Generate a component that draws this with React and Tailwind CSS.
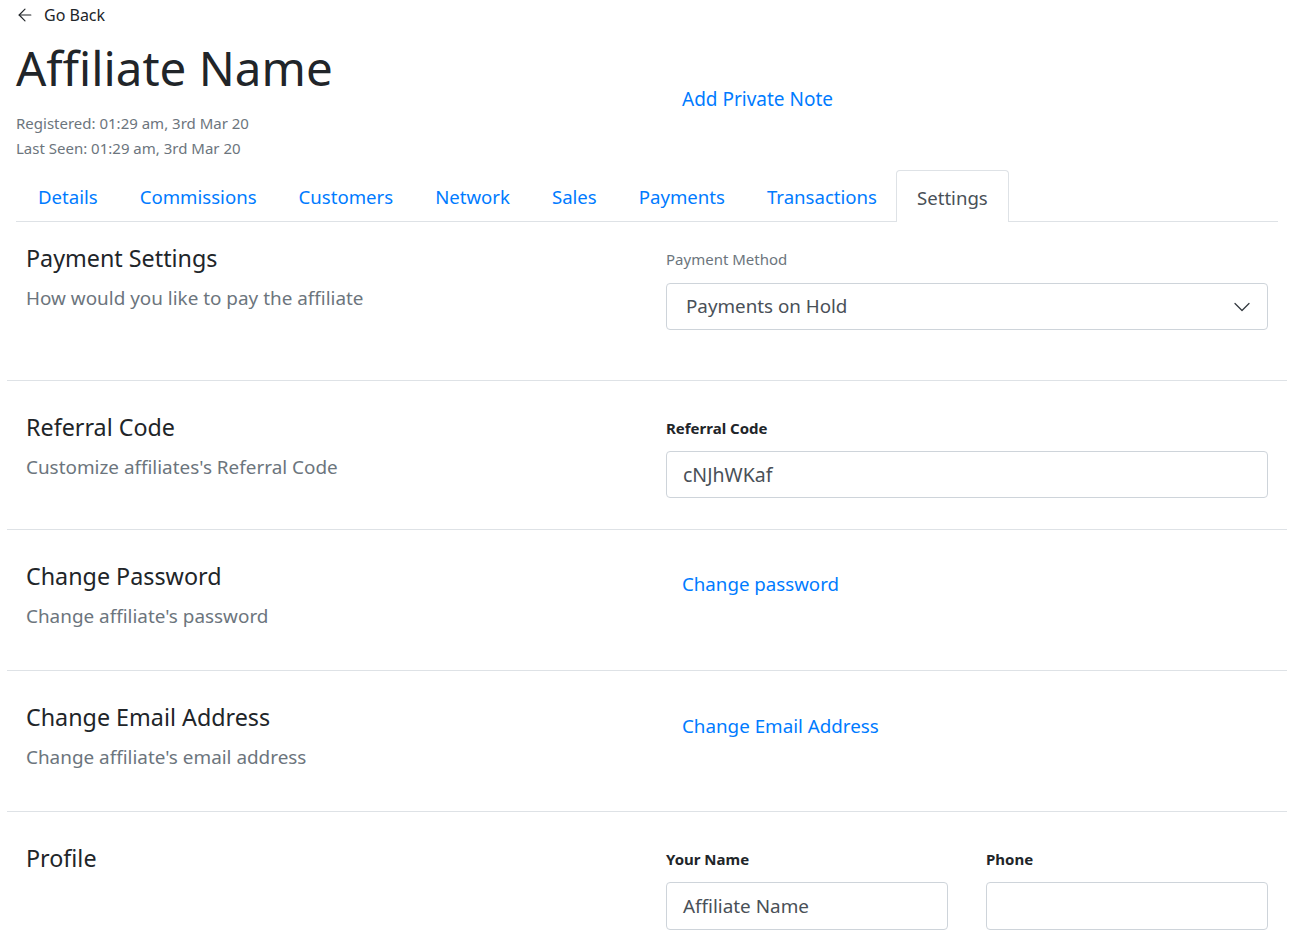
import React from 'react';
import { ArrowLeft, ChevronDown } from 'lucide-react';

const tabs = ['Details', 'Commissions', 'Customers', 'Network', 'Sales', 'Payments', 'Transactions', 'Settings'];

const Section = ({ first, heightClass, title, subtitle, children }) => (
  <div className={`flex border-b border-[#dee2e6] px-[19px] ${first ? 'pt-[22px]' : 'pt-[32px]'} ${heightClass}`}>
    <div className="w-[640px] shrink-0">
      <div className="text-[23.3px] leading-[29px] text-[#212529]">{title}</div>
      {subtitle && (
        <div className="mt-[11px] text-[18.9px] leading-[28px] text-[#6c757d]">{subtitle}</div>
      )}
    </div>
    <div className="flex-1">{children}</div>
  </div>
);

const Label = ({ children, bold }) => (
  <div className={`text-[15px] leading-[22px] mt-[4px] ${bold ? 'font-bold text-[#212529]' : 'text-[#6c757d]'}`}>
    {children}
  </div>
);

export default function App() {
  return (
    <div className="min-h-screen bg-white font-['Noto_Sans',sans-serif] text-[#212529]">
      <div className="px-4">
        {/* Header */}
        <div className="flex h-[30px] items-center gap-[9px] ml-[-1px] text-[16px] text-[#212529]">
          <ArrowLeft size={20} strokeWidth={1.4} />
          <span>Go Back</span>
        </div>
        <div className="flex">
          <div className="w-[650px] shrink-0">
            <h1 className="mt-[4px] text-[47.5px] leading-[67px] text-[#212529]">Affiliate Name</h1>
            <div className="mt-[10px] text-[15px] leading-[25px] text-[#6c757d]">
              <div>Registered: 01:29 am, 3rd Mar 20</div>
              <div>Last Seen: 01:29 am, 3rd Mar 20</div>
            </div>
          </div>
          <div className="pt-[54px] pl-[16px]">
            <a className="text-[19px] leading-[30px] text-[#007bff]">Add Private Note</a>
          </div>
        </div>

        {/* Tabs */}
        <div className="mt-[9px] mr-[-1px] flex h-[52px] border-b border-[#dee2e6]">
          {tabs.map((t, i) => (
            <div
              key={t}
              className={`flex h-[52px] items-center pt-[2px] text-[18.6px] ${
                t === 'Settings'
                  ? 'rounded-t-[4px] border border-b-0 border-[#dee2e6] bg-white px-[20px] text-[#495057] mb-[-1px] ml-[-2px]'
                  : `px-[21px] text-[#007bff] ${i === 0 ? 'pl-[22px]' : ''}`
              }`}
            >
              {t}
            </div>
          ))}
        </div>
      </div>

      {/* Settings */}
      <div className="mx-[7px] w-[1280px]">
        <Section first heightClass="h-[159px]" title="Payment Settings" subtitle="How would you like to pay the affiliate">
          <Label>Payment Method</Label>
          <div className="mt-[13px] flex h-[47px] items-center justify-between rounded-[4px] border border-[#ced4da] pl-[19px] pr-[11px] text-[18.8px] text-[#495057]">
            <span>Payments on Hold</span>
            <ChevronDown size={28} strokeWidth={1.1} className="text-[#343a40]" />
          </div>
        </Section>

        <Section heightClass="h-[149px]" title="Referral Code" subtitle="Customize affiliates's Referral Code">
          <Label bold>Referral Code</Label>
          <div className="mt-[12px] flex h-[47px] items-center rounded-[4px] border border-[#ced4da] px-[16px] text-[19.5px] text-[#495057]">
            cNJhWKaf
          </div>
        </Section>

        <Section heightClass="h-[141px]" title="Change Password" subtitle="Change affiliate's password">
          <div className="pl-[16px] pt-[7px] text-[18.7px] leading-[30px] text-[#007bff]">Change password</div>
        </Section>

        <Section heightClass="h-[141px]" title="Change Email Address" subtitle="Change affiliate's email address">
          <div className="pl-[16px] pt-[8px] text-[18.8px] leading-[30px] text-[#007bff]">Change Email Address</div>
        </Section>

        <div className="flex px-[19px] pt-[32px] pb-[12px]">
          <div className="w-[640px] shrink-0">
            <div className="text-[23.3px] leading-[29px] text-[#212529]">Profile</div>
          </div>
          <div className="flex flex-1 gap-[38px]">
            <div className="flex-1">
              <Label bold>Your Name</Label>
              <div className="mt-[12px] flex h-[48px] items-center rounded-[4px] border border-[#ced4da] px-[16px] text-[18.9px] text-[#495057]">
                Affiliate Name
              </div>
            </div>
            <div className="flex-1">
              <Label bold>Phone</Label>
              <div className="mt-[12px] h-[48px] rounded-[4px] border border-[#ced4da]" />
            </div>
          </div>
        </div>
      </div>
    </div>
  );
}
